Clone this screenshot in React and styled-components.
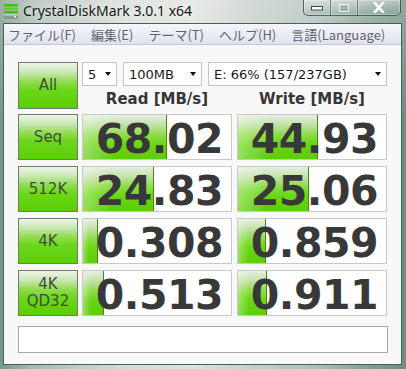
import React from "react";
import styled, { createGlobalStyle } from "styled-components";

const Global = createGlobalStyle`
  html, body { margin: 0; padding: 0; }
  body { width: 406px; height: 369px; overflow: hidden; background: #7f9a8e; }
  * { box-sizing: border-box; }
`;

const Frame = styled.div`
  width: 406px;
  height: 369px;
  display: flex;
  flex-direction: column;
  background:
    linear-gradient(180deg, rgba(255,255,255,0.25) 0%, rgba(255,255,255,0) 30%),
    linear-gradient(90deg, #7a968a 0%, #a9bab2 8%, #d6dbd7 30%, #dfe2de 48%, #c6cfca 62%, #aebfb8 78%, #7f9c90 92%, #6f8d80 100%);
`;

const TitleBar = styled.div`
  height: 23px;
  display: flex;
  align-items: flex-start;
  padding-left: 3px;
  flex-shrink: 0;
`;

const TitleText = styled.span`
  margin-left: 4px;
  margin-top: 2px;
  font-family: "Noto Sans", "DejaVu Sans", sans-serif;
  font-size: 14px;
  line-height: 18px;
  color: #141a18;
  text-shadow: 0 0 6px rgba(255,255,255,0.9);
`;

const Controls = styled.div`
  margin-left: auto;
  margin-right: 5px;
  display: flex;
  height: 16px;
  border: 1px solid rgba(40, 60, 60, 0.75);
  border-top: none;
  border-radius: 0 0 5px 5px;
  overflow: hidden;
  background: linear-gradient(180deg, rgba(255,255,255,0.35), rgba(255,255,255,0.1) 50%, rgba(120,150,140,0.25));
`;

const Ctrl = styled.div`
  width: ${(p) => p.w}px;
  height: 100%;
  display: flex;
  align-items: center;
  justify-content: center;
  border-left: ${(p) => (p.first ? "none" : "1px solid rgba(40,60,60,0.55)")};
  box-shadow: inset 0 0 0 1px rgba(255,255,255,0.3);
`;

const Client = styled.div`
  flex: 1;
  margin: 0 4px 4px 3px;
  border: 1px solid #44605a;
  background: #f8f8f8;
  display: flex;
  flex-direction: column;
`;

const MenuBar = styled.div`
  height: 21px;
  display: flex;
  align-items: center;
  gap: 15px;
  padding-left: 4px;
  background: linear-gradient(180deg, #f5f6fb 0%, #e9ebf4 60%, #dfe2ee 100%);
  border-bottom: 1px solid #c4c8d6;
  font-family: "Noto Sans CJK JP", "Noto Sans", sans-serif;
  font-size: 13px;
  color: #62646c;
`;

const MenuItem = styled.span`
  line-height: 19px;
`;

const Body = styled.div`
  padding: 17px 0 0 14px;
  display: flex;
  flex-direction: column;
`;

const Top = styled.div`
  display: flex;
  gap: 4px;
`;

const TestButton = styled.div`
  width: 60px;
  height: ${(p) => p.h}px;
  border: 1px solid #6f7c6a;
  background: linear-gradient(180deg, #eef5ea 0%, #c6e6ae 22%, #8fdc4c 42%, #6ad81a 60%, #5ccd06 100%);
  display: flex;
  align-items: center;
  justify-content: center;
  text-align: center;
  font-family: "DejaVu Sans", sans-serif;
  font-size: 15px;
  line-height: 17px;
  color: #3f4e38;
  flex-shrink: 0;
`;

const TopRight = styled.div`
  display: flex;
  flex-direction: column;
`;

const Selects = styled.div`
  display: flex;
  gap: 6px;
`;

const Select = styled.div`
  width: ${(p) => p.w}px;
  height: 24px;
  border: 1px solid #c4c4c4;
  background: #fff;
  display: flex;
  align-items: center;
  justify-content: space-between;
  padding: 0 5px 0 5px;
  font-family: "DejaVu Sans", sans-serif;
  font-size: 13px;
  color: #1a1a1a;
`;

const Arrow = styled.span`
  width: 0;
  height: 0;
  border-left: 3.5px solid transparent;
  border-right: 3.5px solid transparent;
  border-top: 4px solid #111;
`;

const Headers = styled.div`
  display: flex;
  gap: 5px;
  height: 23px;
  align-items: center;
`;

const Header = styled.div`
  width: 150px;
  text-align: center;
  font-family: "DejaVu Sans", sans-serif;
  font-weight: bold;
  font-size: 15px;
  color: #363636;
  padding-top: 2px;
`;

const Rows = styled.div`
  display: flex;
  flex-direction: column;
  gap: 6px;
  margin-top: 5px;
`;

const Row = styled.div`
  display: flex;
  gap: 4px;
`;

const Values = styled.div`
  display: flex;
  gap: 5px;
`;

const ValueBox = styled.div`
  position: relative;
  width: 150px;
  height: 46px;
  border: 1px solid #c8c8c8;
  background: #fff;
  display: flex;
  align-items: center;
  justify-content: flex-end;
`;

const Bar = styled.div`
  position: absolute;
  left: 0;
  top: 0;
  bottom: 0;
  border-right: 1px solid #3f8a12;
  background:
    linear-gradient(90deg, rgba(255,255,255,0.35) 0%, rgba(255,255,255,0) 40%),
    linear-gradient(180deg, #e6eee2 0%, #c2e2a8 22%, #8edc48 45%, #6ad616 65%, #5ccd06 100%);
`;

const Num = styled.span`
  position: relative;
  padding: 3px 8px 0 0;
  font-family: "DejaVu Sans", sans-serif;
  font-weight: bold;
  font-size: 41px;
  line-height: 40px;
  letter-spacing: -0.5px;
  color: #383838;
  white-space: nowrap;
`;

const Status = styled.div`
  margin-top: 10px;
  width: 370px;
  height: 27px;
  border: 1px solid #a8a8a8;
  background: #fff;
`;

const AppIcon = () => (
  <svg width="16" height="17" viewBox="0 0 16 17" style={{ marginTop: 3 }}>
    <rect x="1" y="1" width="14" height="2.5" fill="#3cc21a" />
    <rect x="1" y="4.5" width="14" height="2.5" fill="#4fd828" />
    <rect x="1" y="8" width="14" height="2.5" fill="#3cc21a" />
    <rect x="1" y="11" width="14" height="5" rx="1" fill="#8a9490" />
    <rect x="1" y="11" width="14" height="1.5" fill="#c8d0cc" />
    <rect x="11" y="13" width="2" height="1.5" fill="#e0ffe0" />
  </svg>
);

const rows = [
  { label: "Seq", r: "68.02", rw: 84, w: "44.93", ww: 80 },
  { label: "512K", r: "24.83", rw: 71, w: "25.06", ww: 71 },
  { label: "4K", r: "0.308", rw: 15, w: "0.859", ww: 28 },
  { label: ["4K", "QD32"], r: "0.513", rw: 21, w: "0.911", ww: 29 },
];

export default function App() {
  return (
    <>
      <Global />
      <Frame>
        <TitleBar>
          <AppIcon />
          <TitleText>CrystalDiskMark 3.0.1 x64</TitleText>
          <Controls>
            <Ctrl w={26} first>
              <svg width="12" height="6"><rect x="0.5" y="1.5" width="11" height="3.5" fill="#fff" stroke="#3a4a4a" strokeWidth="1" /></svg>
            </Ctrl>
            <Ctrl w={27}>
              <svg width="12" height="10"><rect x="1.5" y="1.5" width="9" height="7" fill="none" stroke="rgba(255,255,255,0.7)" strokeWidth="1" /><rect x="3.5" y="3.5" width="5" height="3" fill="none" stroke="rgba(60,80,80,0.35)" strokeWidth="1" /></svg>
            </Ctrl>
            <Ctrl w={43}>
              <svg width="12" height="11" viewBox="0 0 12 11"><path d="M2 1 L10 10 M10 1 L2 10" stroke="#fff" strokeWidth="2.6" strokeLinecap="square" /></svg>
            </Ctrl>
          </Controls>
        </TitleBar>
        <Client>
          <MenuBar>
            <MenuItem>ファイル(F)</MenuItem>
            <MenuItem>編集(E)</MenuItem>
            <MenuItem>テーマ(T)</MenuItem>
            <MenuItem>ヘルプ(H)</MenuItem>
            <MenuItem>言語(Language)</MenuItem>
          </MenuBar>
          <Body>
            <Top>
              <TestButton h={47}>All</TestButton>
              <TopRight>
                <Selects>
                  <Select w={35}>5<Arrow /></Select>
                  <Select w={79}>100MB<Arrow /></Select>
                  <Select w={179}>E: 66% (157/237GB)<Arrow /></Select>
                </Selects>
                <Headers>
                  <Header>Read [MB/s]</Header>
                  <Header>Write [MB/s]</Header>
                </Headers>
              </TopRight>
            </Top>
            <Rows>
              {rows.map((row, i) => (
                <Row key={i}>
                  <TestButton h={46}>
                    {Array.isArray(row.label) ? (
                      <span>{row.label[0]}<br />{row.label[1]}</span>
                    ) : (
                      row.label
                    )}
                  </TestButton>
                  <Values>
                    <ValueBox>
                      <Bar style={{ width: row.rw }} />
                      <Num>{row.r}</Num>
                    </ValueBox>
                    <ValueBox>
                      <Bar style={{ width: row.ww }} />
                      <Num>{row.w}</Num>
                    </ValueBox>
                  </Values>
                </Row>
              ))}
            </Rows>
            <Status />
          </Body>
        </Client>
      </Frame>
    </>
  );
}
